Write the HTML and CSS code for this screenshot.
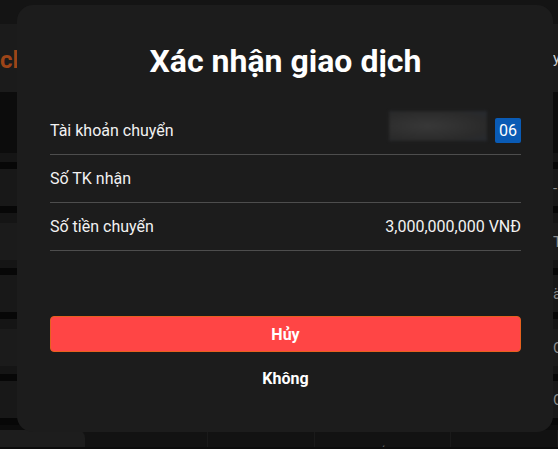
FILE: index.html
```html
<!DOCTYPE html>
<html lang="vi">
<head>
  <meta charset="UTF-8" />
  <meta name="viewport" content="width=device-width, initial-scale=1.0" />
  <title>Xác nhận giao dịch</title>
  <link rel="stylesheet" href="styles.css">
</head>
<body>
  <div class="app">
    <div class="topbar"></div>
    <div class="header">
      <span class="header-title">clone</span>
      <span class="peek">y</span>
    </div>
    <div class="spacer"><span class="peek"></span></div>
    <div class="pad"></div>
    <div class="group"><span class="peek">-</span></div>
    <div class="card"><span class="peek">T</span></div>
    <div class="group"><span class="peek">ä</span></div>
    <div class="card"><span class="peek">C</span></div>
    <div class="group"><span class="peek">C</span></div>
    <div class="footer">
      <div class="foot-cell first">Mã</div>
      <div class="foot-cell">0912345678</div>
      <div class="foot-cell">1,000</div>
      <div class="foot-cell wide">Chi tiết</div>
      <div class="foot-cell">Ví</div>
    </div>
  </div>

  <div class="modal">
    <h1 class="modal-title">Xác nhận giao dịch</h1>
    <div class="rows">
      <div class="row">
        <span class="label">Tài khoản chuyển</span>
        <div class="account">
          <div class="masked"></div>
          <span class="badge">06</span>
        </div>
      </div>
      <div class="row">
        <span class="label">Số TK nhận</span>
      </div>
      <div class="row">
        <span class="label">Số tiền chuyển</span>
        <span class="value">3,000,000,000 VNĐ</span>
      </div>
    </div>
    <button class="btn btn-danger">Hủy</button>
    <button class="btn btn-plain">Không</button>
  </div>
</body>
</html>
```

FILE: styles.css
```css
* { box-sizing: border-box; }
body { margin: 0; height: 449px; overflow: hidden; background: #0c0c0c; font-family: Roboto, "Noto Sans", sans-serif; color: #f2f2f2; }

/* dimmed page behind the dialog */
.app { display: flex; flex-direction: column; }
.app > div { display: flex; align-items: center; }
.topbar { height: 24px; background: #141414; }
.header { height: 68px; background: #1b1b1b; }
.header-title { font-size: 24px; font-weight: 700; color: #9d4418; margin-top: 4px; }
.spacer { height: 61px; background: #0c0c0c; }
.pad { height: 9px; background: #151515; }
.group { height: 51px; background: #181818; border-top: 7px solid #070707; border-bottom: 7px solid #070707; }
.card { height: 37px; background: #1b1b1b; margin: 10px 0 8px; box-shadow: 0 -10px 0 #151515, 0 8px 0 #151515; }
.peek { margin-left: auto; width: 5px; overflow: hidden; white-space: nowrap; font-size: 15px; color: #8a8a8a; }
.header .peek { color: #cfcfcf; }
.footer { height: 17px; margin-top: 5px; background: #121212; align-items: flex-start !important; overflow: hidden; }
.foot-cell { height: 100%; padding: 15px 0 0 30px; width: 120px; font-size: 14px; color: #5e5e5e; border-right: 1px solid #1a1a1a; }
.foot-cell.first { width: 95px; background: #1d1d1d; border-radius: 0 8px 0 0; border-right: none; margin-right: 13px; }
.foot-cell.wide { width: 155px; }

/* dialog */
.modal { position: absolute; left: 17px; top: 5px; width: 536px; padding: 37px 32px 36px 33px; background: #1c1c1c; border-radius: 16px; display: flex; flex-direction: column; }
.modal-title { margin: 0; font-size: 32px; line-height: 38px; font-weight: 700; text-align: center; color: #fff; }
.rows { margin-top: 27px; }
.row { display: flex; align-items: center; justify-content: space-between; height: 48px; border-bottom: 1px solid #4d4d4d; font-size: 16px; line-height: 24px; }
.account { display: flex; align-items: center; gap: 8px; }
.masked { width: 98px; height: 30px; margin-bottom: 9px; background: radial-gradient(ellipse at 40% 50%, #383838, #2a2a2a 70%, #262a30); filter: blur(1.5px); }
.badge { width: 26px; height: 25px; border-radius: 2px; background: #0a5bb5; color: #fff; font-size: 16px; line-height: 25px; text-align: center; }
.value { color: #f2f2f2; }
.btn { display: block; width: 100%; height: 36px; font-family: inherit; font-size: 16px; font-weight: 700; color: #fff; cursor: pointer; }
.btn-danger { margin-top: 65px; background: #ff4545; border: 1px solid #e6601e; border-radius: 4px; }
.btn-plain { margin-top: 8px; background: none; border: none; }
```
